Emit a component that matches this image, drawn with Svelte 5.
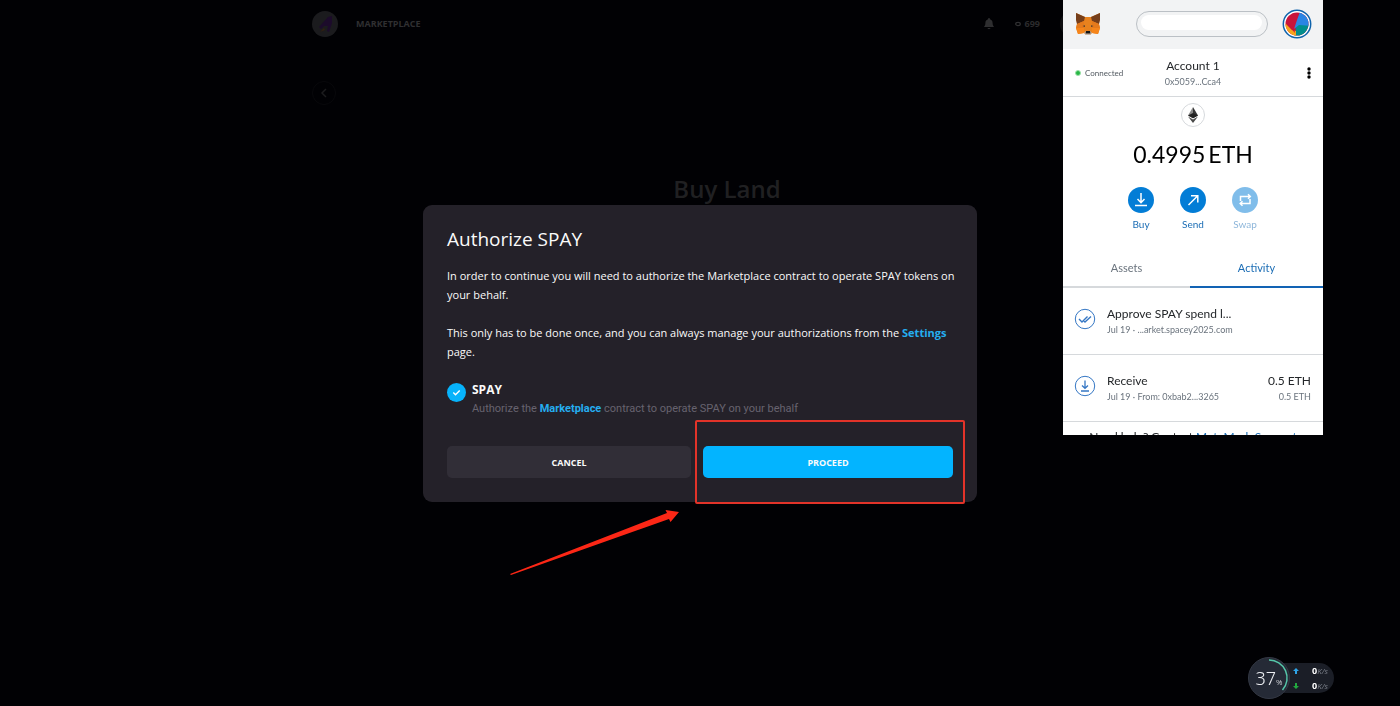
<script>
  let actions = [
    { name: "Buy", disabled: false },
    { name: "Send", disabled: false },
    { name: "Swap", disabled: true },
  ];

  let activity = [
    { icon: "approve", title: "Approve SPAY spend l...", date: "Jul 19", info: "...arket.spacey2025.com", amount: "", fiat: "" },
    { icon: "receive", title: "Receive", date: "Jul 19", info: "From: 0xbab2...3265", amount: "0.5 ETH", fiat: "0.5 ETH" },
  ];

  let speeds = [
    { dir: "up", value: 0 },
    { dir: "down", value: 0 },
  ];

  let usage = 37;
  let tab = "Activity";
</script>

<div class="page">
  <header class="topbar">
    <a class="brand" href="#home" aria-label="Home">
      <svg width="26" height="26" viewBox="0 0 26 26">
        <circle cx="13" cy="13" r="13" fill="#1b1b1e" />
        <path d="M7 16 L16 6 L20 5 L20 12 L17 21 L15 20 L16 15 L12 15 L9 18 Z" fill="#1c0b2b" />
        <path d="M8 21 L12 17 L13 19 Z" fill="#31200f" />
      </svg>
    </a>
    <a class="nav" href="#marketplace">MARKETPLACE</a>
    <div class="status">
      <button class="bell" aria-label="Notifications">
        <svg width="12" height="12" viewBox="0 0 12 12">
          <path d="M6 0 C7 0 7 1 7 1.3 C9 2 9.600 3.500 9.600 5 C9.600 7.500 10.500 8 11 9 H1 C1.500 8 2.400 7.500 2.400 5 C2.400 3.500 3 2 5 1.300 C5 1 5 0 6 0 Z M4.500 10 H7.500 C7.300 11.500 4.700 11.500 4.500 10 Z" fill="#2e2e30" />
        </svg>
      </button>
      <span class="balance">
        <svg width="6" height="6" viewBox="0 0 6 6"><ellipse cx="3" cy="3" rx="2.300" ry="1.600" fill="none" stroke="#303032" stroke-width="1.200" /></svg>
        699
      </span>
      <span class="user"></span>
    </div>
  </header>
  <main class="content">
    <button class="back" aria-label="Back">
      <svg width="8" height="10" viewBox="0 0 8 10"><path d="M6 1 L2 5 L6 9" fill="none" stroke="#1c1c1e" stroke-width="1.500" /></svg>
    </button>
    <h1>Buy Land</h1>
  </main>
</div>

<div class="overlay">
  <div class="modal" role="dialog" aria-labelledby="modal-title">
    <h2 id="modal-title">Authorize SPAY</h2>
    <p>In order to continue you will need to authorize the Marketplace contract to operate SPAY tokens on your behalf.</p>
    <p>This only has to be done once, and you can always manage your authorizations from the <a href="#settings">Settings</a> page.</p>

    <div class="authorization">
      <svg width="19" height="19" viewBox="0 0 19 19">
        <circle cx="9.5" cy="9.5" r="9.5" fill="#07b3fb" />
        <path d="M6.300 9.600 L8.500 11.700 L12.700 7.500" fill="none" stroke="#fff" stroke-width="1.400" />
      </svg>
      <div>
        <strong>SPAY</strong>
        <small>Authorize the <a href="#contract">Marketplace</a> contract to operate SPAY on your behalf</small>
      </div>
    </div>

    <div class="actions">
      <button class="cancel">CANCEL</button>
      <button class="proceed">PROCEED</button>
      <span class="highlight"></span>
      <svg class="arrow" width="170" height="68" viewBox="0 0 170 68">
        <path d="M0 66 L157 5 L155.500 2 L169 4 L160.500 14 L159 11 L1 67 Z" fill="#fc2716" />
      </svg>
    </div>
  </div>
</div>

<aside class="wallet">
  <div class="wallet-bar">
    <svg width="26" height="24" viewBox="0 0 26 24">
      <path d="M1 1 L10 5 H16 L25 1 L24 12 L25 16 L23 22 L17 21 L15 23 H11 L9 21 L3 22 L1 16 L2 12 Z" fill="#e8821e" />
      <path d="M1 1 L10 5 L9 9 L2 12 L1 8 Z M25 1 L16 5 L17 9 L24 12 L25 8 Z" fill="#763e1a" />
      <path d="M1 16 L9 16 L9 21 L3 22 Z M25 16 L17 16 L17 21 L23 22 Z" fill="#f6851b" />
      <path d="M2 12 L9 9 L9 16 L1 16 Z M24 12 L17 9 L17 16 L25 16 Z" fill="#e57a1c" />
      <path d="M7.500 14 L10 13.200 L10 15 Z M18.500 14 L16 13.200 L16 15 Z" fill="#4a3a30" />
      <path d="M9 21 L11 19 H15 L17 21 L15 23 H11 Z" fill="#c9b7a8" />
      <path d="M11 19 H15 L15.500 21.500 H10.500 Z" fill="#161616" />
    </svg>
    <button class="network" aria-label="Network"><span></span></button>
    <button class="identicon" aria-label="My accounts">
      <svg width="30" height="30" viewBox="0 0 30 30">
        <defs><clipPath id="avatar"><circle cx="15" cy="15" r="11.500" /></clipPath></defs>
        <circle cx="15" cy="15" r="13.700" fill="#fff" stroke="#0f63ac" stroke-width="1.500" />
        <g clip-path="url(#avatar)">
          <rect width="30" height="30" fill="#c8143b" />
          <path d="M14 16 L30 15 V30 H13 Z" fill="#018e8c" />
          <path d="M19 0 L15 11 L12 20 L17 16 L30 17 V0 Z" fill="#2a85e4" />
          <path d="M0 15 L4 15 L10 21 L14 22 L14 30 H0 Z" fill="#f7a51c" />
          <path d="M5 15 L12 19 L13 24 Z" fill="#c8143b" />
        </g>
      </svg>
    </button>
  </div>

  <div class="account">
    <span class="connected"><i></i>Connected</span>
    <button class="account-name"><b>Account 1</b><small>0x5059...Cca4</small></button>
    <button class="menu" aria-label="Account options">
      <svg width="4" height="12" viewBox="0 0 4 12"><circle cx="2" cy="2" r="1.700" /><circle cx="2" cy="6" r="1.700" /><circle cx="2" cy="10" r="1.700" /></svg>
    </button>
  </div>

  <div class="overview">
    <svg width="24" height="24" viewBox="0 0 24 24">
      <circle cx="12" cy="12" r="11.500" fill="#fff" stroke="#d6d9dc" />
      <path d="M12 4 L7 12.500 L12 15.300 Z" fill="#8a8a8a" />
      <path d="M12 4 L17 12.500 L12 15.300 Z" fill="#343434" />
      <path d="M7 12.500 L12 10 L17 12.500 L12 15.300 Z" fill="#222" />
      <path d="M7 13.600 L12 16.500 L17 13.600 L12 20 Z" fill="#4a4a4a" />
    </svg>
    <div class="amount"><span>0.4995</span><span>ETH</span></div>
    <div class="wallet-actions">
      {#each actions as action}
        <button disabled={action.disabled}>
          <svg width="26" height="26" viewBox="0 0 26 26">
            <circle cx="13" cy="13" r="13" fill="#037dd6" />
            <g fill="none" stroke="#fff" stroke-width="1.500">
              {#if action.name === "Buy"}
                <path d="M13 6 V15.500 M9.500 12 L13 15.700 L16.500 12 M7 18.500 H19" />
              {:else if action.name === "Send"}
                <path d="M8.500 18 L17.500 9 M11 8.700 H17.800 V15.500" />
              {:else}
                <path d="M8.500 14 V9.500 H18 M16 7.300 L18.300 9.500 L16 11.700 M18 12 V16.500 H8.500 M10.500 14.300 L8.200 16.500 L10.500 18.700" />
              {/if}
            </g>
          </svg>
          {action.name}
        </button>
      {/each}
    </div>
  </div>

  <div class="tabs">
    {#each ["Assets", "Activity"] as name}
      <button class:active={tab === name} on:click={() => (tab = name)}>{name}</button>
    {/each}
  </div>

  <ul class="activity">
    {#each activity as item}
      <li>
        <svg width="22" height="22" viewBox="0 0 22 22" fill="none" stroke="#3577c4">
          <circle cx="11" cy="11" r="9.700" />
          {#if item.icon === "approve"}
            <path d="M5 11 L8 14 L13.500 8.500 M9.500 12.500 L11 14 L17 8.500" stroke-width="1.400" />
          {:else}
            <path d="M11 5.500 V13 M8 10.500 L11 13.300 L14 10.500 M7 16 H15" stroke-width="1.300" />
          {/if}
        </svg>
        <div class="detail">
          <b>{item.title}</b>
          <small>{item.date} · {item.info}</small>
        </div>
        <div class="value">
          <b>{item.amount}</b>
          <small>{item.fiat}</small>
        </div>
      </li>
    {/each}
  </ul>
  <p class="support">Need help? Contact <a href="#support">MetaMask Support</a></p>
</aside>

<div class="monitor">
  <div class="gauge">
    <svg width="42" height="42" viewBox="0 0 42 42">
      <circle cx="21" cy="21" r="20.500" fill="#252a36" stroke="#343945" />
      <path d="M21 3 A18 18 0 0 1 34.500 33" fill="none" stroke="#55c6a9" stroke-width="1.500" />
    </svg>
    <span>{usage}<small>%</small></span>
  </div>
  <div class="speeds">
    {#each speeds as speed}
      <div>
        <svg class={speed.dir} width="6" height="6" viewBox="0 0 6 6"><path d="M3 0 L6 3 H4 V6 H2 V3 H0 Z" /></svg>
        <b>{speed.value}</b><i>K/s</i>
      </div>
    {/each}
  </div>
</div>

<style>
  :global(body) {
    margin: 0;
    background: #010104;
    font-family: "Open Sans", "Noto Sans", sans-serif;
  }

  * {
    box-sizing: border-box;
  }

  button {
    border: 0;
    padding: 0;
    background: none;
    color: inherit;
    font: inherit;
    cursor: pointer;
  }

  a {
    color: #25aef0;
    font-weight: bold;
    text-decoration: none;
  }

  svg {
    display: block;
    flex: none;
  }

  .page {
    max-width: 776px;
    margin: 0 auto;
    color: #2b2b2d;
  }

  .topbar {
    display: flex;
    align-items: center;
    height: 47px;
  }

  .topbar .nav {
    margin-left: 18px;
    color: #2f2f31;
    font-size: 9px;
  }

  .status {
    display: flex;
    align-items: center;
    gap: 20px;
    margin-left: auto;
  }

  .balance {
    display: flex;
    align-items: center;
    gap: 4px;
    font-size: 9px;
    font-weight: bold;
  }

  .user {
    width: 28px;
    height: 28px;
    border-radius: 50%;
    background: #101012;
  }

  .content {
    padding-top: 34px;
  }

  .back {
    display: flex;
    align-items: center;
    justify-content: center;
    width: 24px;
    height: 24px;
    border: 1px solid #08080b;
    border-radius: 50%;
  }

  h1 {
    margin: 66px 0 0;
    padding-left: 54px;
    color: #202022;
    font-size: 24px;
    font-weight: 600;
    line-height: 36px;
    text-align: center;
  }

  .overlay {
    position: fixed;
    inset: 0;
    display: flex;
    align-items: center;
    justify-content: center;
    padding-top: 1px;
  }

  .modal {
    width: 554px;
    padding: 22px 24px 24px;
    border-radius: 9px;
    background: #242129;
    color: #fafafa;
    font-size: 12px;
    line-height: 19px;
  }

  h2 {
    margin: 0 0 15px;
    font-size: 19px;
    font-weight: normal;
    line-height: 24px;
  }

  .modal p {
    margin: 0 -8px 19px 0;
    font-size: 11px;
  }

  .authorization {
    display: flex;
    gap: 6px;
  }

  .authorization svg {
    margin-top: 3px;
  }

  .authorization strong,
  .authorization small {
    display: block;
  }

  .authorization small {
    color: #67636f;
    font-family: Roboto, sans-serif;
    font-size: 11px;
  }

  .actions {
    position: relative;
    display: grid;
    grid-template-columns: 244fr 250fr;
    gap: 12px;
    margin-top: 28px;
  }

  .actions button {
    height: 32px;
    border-radius: 5px;
    font-size: 9px;
    font-weight: bold;
  }

  .actions .cancel {
    background: #312e37;
  }

  .actions .proceed {
    background: #03b4ff;
  }

  .highlight {
    position: absolute;
    top: -26px;
    right: -12px;
    bottom: -26px;
    width: 270px;
    border: 2px solid #e23329;
    border-radius: 2px;
  }

  .arrow {
    position: absolute;
    top: 62px;
    left: 63px;
  }

  .wallet {
    position: fixed;
    top: 0;
    right: 77px;
    width: 260px;
    height: 435px;
    overflow: hidden;
    background: #fff;
    color: #24272a;
    font-family: Lato, "Open Sans", sans-serif;
    font-size: 12px;
    line-height: 16px;
  }

  .wallet b {
    font-weight: normal;
  }

  .wallet small {
    color: #6a737d;
    font-size: 9px;
  }

  .wallet-bar {
    display: flex;
    align-items: center;
    height: 49px;
    padding: 0 11px 2px 12px;
    background: #f2f3f4;
  }

  .network {
    width: 132px;
    height: 26px;
    margin-left: auto;
    padding: 3px 5px 6px 4px;
    border: 1px solid #bbc0c5;
    border-radius: 13px;
  }

  .network span {
    display: block;
    height: 100%;
    border-radius: 8px;
    background: #fff;
  }

  .identicon {
    margin-left: 14px;
  }

  .account {
    display: grid;
    grid-template-columns: 1fr auto 1fr;
    align-items: center;
    height: 48px;
    padding: 0 12px;
    border-bottom: 1px solid #d6d9dc;
  }

  .connected {
    display: flex;
    align-items: center;
    gap: 4px;
    color: #535a61;
    font-size: 8px;
  }

  .connected i {
    width: 6px;
    height: 6px;
    border: 1px solid #9be0a8;
    border-radius: 50%;
    background: #28b745;
  }

  .account-name {
    padding-top: 2px;
  }

  .account-name b,
  .account-name small {
    display: block;
  }

  .menu {
    justify-self: end;
  }

  .overview {
    display: flex;
    flex-direction: column;
    align-items: center;
    padding-top: 6px;
  }

  .amount {
    display: flex;
    gap: 3px;
    margin-top: 11px;
    color: #000;
    font-size: 23px;
    line-height: 32px;
  }

  .wallet-actions {
    display: flex;
    gap: 12px;
    margin-top: 17px;
    color: #1b6db5;
    font-size: 10px;
  }

  .wallet-actions button {
    display: flex;
    flex-direction: column;
    align-items: center;
    gap: 3px;
    width: 40px;
  }

  .wallet-actions button:disabled {
    opacity: 0.5;
  }

  .tabs {
    display: grid;
    grid-template-columns: 127fr 133fr;
    margin-top: 18px;
  }

  .tabs button {
    height: 38px;
    border-bottom: 2px solid #d6d9dc;
    color: #6a737d;
    font-size: 11px;
  }

  .tabs .active {
    border-color: #1263b4;
    color: #1b6db5;
  }

  .activity {
    margin: 0;
    padding: 0;
    list-style: none;
  }

  .activity li {
    display: flex;
    height: 67px;
    padding: 18px 12px 0 11px;
    border-bottom: 1px solid #d6d9dc;
  }

  .activity svg {
    margin-top: 2px;
  }

  .detail {
    flex: 1;
    margin-left: 11px;
  }

  .value {
    text-align: right;
  }

  .activity b,
  .activity small {
    display: block;
  }

  .support {
    margin: 7px 0 0;
    text-align: center;
    white-space: nowrap;
  }

  .support a {
    color: #1b6db5;
    font-weight: normal;
  }

  .monitor {
    position: fixed;
    right: 66px;
    bottom: 7px;
    display: flex;
    align-items: center;
  }

  .gauge {
    position: relative;
    z-index: 1;
  }

  .gauge span {
    position: absolute;
    inset: 0;
    color: #eceef2;
    font-family: "Noto Sans", sans-serif;
    font-size: 18px;
    font-weight: 300;
    line-height: 42px;
    text-align: center;
  }

  .gauge small {
    font-size: 8px;
  }

  .speeds {
    width: 65px;
    margin-left: -21px;
    padding-left: 24px;
    border-radius: 0 15px 15px 0;
    background: #1b1e27;
    font-size: 9px;
    line-height: 15px;
  }

  .speeds div {
    display: flex;
    align-items: center;
    padding-right: 6px;
  }

  .speeds b {
    margin-left: auto;
    color: #fff;
  }

  .speeds i {
    color: #7c808a;
    font-size: 8px;
  }

  .up {
    fill: #2fa4e7;
  }

  .down {
    fill: #22a83f;
    transform: rotate(180deg);
  }
</style>
